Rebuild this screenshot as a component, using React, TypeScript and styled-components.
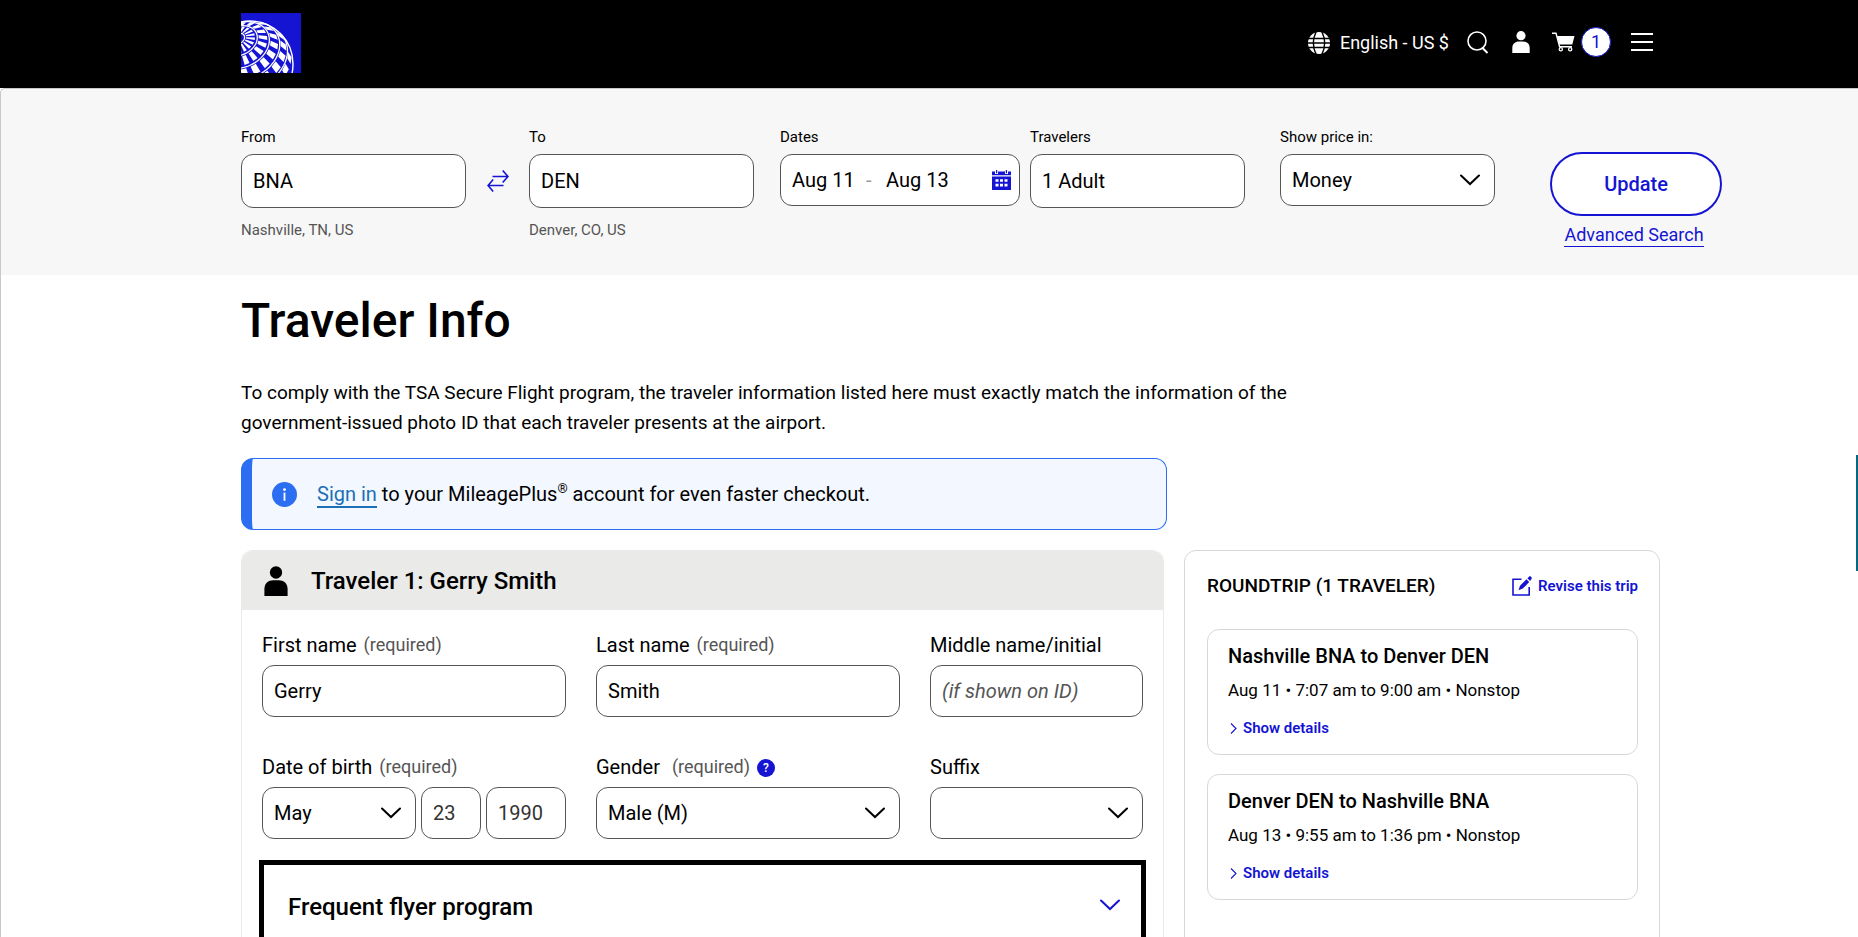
import React from 'react';
import styled, { createGlobalStyle, css } from 'styled-components';

const blue = '#1414d2';

const GlobalStyle = createGlobalStyle`
  *, *::before, *::after { box-sizing: border-box; }
  html, body { margin: 0; }
  body {
    background: #fff;
    color: #000;
    font-family: Roboto, "Liberation Sans", sans-serif;
    font-size: 18px;
    overflow-x: hidden;
  }
  #root { height: 100vh; overflow: hidden; }
  button, input, select { font: inherit; color: inherit; }
  h1, h2, h3, p { margin: 0; }
  a { color: inherit; text-decoration: none; }
`;

/* ---------- globe mark ---------- */

type Vec = [number, number, number];
const cross = (a: Vec, b: Vec): Vec => [
  a[1] * b[2] - a[2] * b[1],
  a[2] * b[0] - a[0] * b[2],
  a[0] * b[1] - a[1] * b[0],
];
const unit = (a: Vec): Vec => {
  const l = Math.hypot(...a);
  return [a[0] / l, a[1] / l, a[2] / l];
};
const pole = unit([-0.28, -0.6, 0.75]);
const axisU = unit(cross(pole, [0, 0, 1]));
const axisV = cross(pole, axisU);
const globe = { x: 9, y: 51, r: 43 };

const project = (colat: number, lon: number) => {
  const t = (colat * Math.PI) / 180;
  const f = (lon * Math.PI) / 180;
  const at = (i: number) =>
    Math.cos(t) * pole[i] + Math.sin(t) * (Math.cos(f) * axisU[i] + Math.sin(f) * axisV[i]);
  return { x: globe.x + globe.r * at(0), y: globe.y + globe.r * at(1), z: at(2) };
};

const rings = [9, 26, 43, 60, 77];

const ringPath = (colat: number) => {
  let d = '';
  let open = false;
  for (let lon = 0; lon <= 360; lon += 4) {
    const p = project(colat, lon);
    if (p.z < 0) {
      open = false;
      continue;
    }
    d += `${open ? 'L' : 'M'}${p.x.toFixed(2)} ${p.y.toFixed(2)}`;
    open = true;
  }
  return d;
};

const tilePath = () => {
  let d = '';
  rings.forEach((inner, band) => {
    for (let lon = 0; lon < 360; lon += 20) {
      const start = lon + (band % 2 ? 10 : 0);
      const corners = [
        project(inner + 2, start),
        project(inner + 2, start + 11),
        project(inner + 14, start + 11),
        project(inner + 14, start),
      ];
      if (corners.some((p) => p.z < 0)) continue;
      d += `M${corners.map((p) => `${p.x.toFixed(2)} ${p.y.toFixed(2)}`).join('L')}Z`;
    }
  });
  return d;
};

const Logo = () => (
  <svg width="60" height="60" viewBox="0 0 60 60" aria-hidden="true">
    <rect width="60" height="60" fill={blue} />
    <path d={tilePath()} fill="#fff" />
    <path d={rings.map(ringPath).join('')} fill="none" stroke="#fff" strokeWidth="1.3" />
    <circle cx={globe.x} cy={globe.y} r={globe.r} fill="none" stroke="#fff" strokeWidth="1.4" />
  </svg>
);

/* ---------- icons ---------- */

const GlobeIcon = () => (
  <svg width="22" height="22" viewBox="0 0 22 22" aria-hidden="true">
    <circle cx="11" cy="11" r="11" fill="#fff" />
    <g fill="none" stroke="#000" strokeWidth="1.4">
      <path d="M0 6.5H22M0 11H22M0 15.5H22" />
      <path d="M8.5 -1Q2.2 11 8.5 23M13.5 -1Q19.8 11 13.5 23" />
    </g>
  </svg>
);
const SearchIcon = () => (
  <svg width="22" height="23" viewBox="0 0 22 23" fill="none" stroke="#fff" strokeWidth="1.6" aria-hidden="true">
    <circle cx="10" cy="10" r="9" />
    <path d="M15 16.5L20.5 22" strokeWidth="2" />
  </svg>
);
const PersonIcon = ({ width, height }: { width: number; height: number }) => (
  <svg width={width} height={height} viewBox="0 0 18 22" preserveAspectRatio="none" fill="currentColor" aria-hidden="true">
    <circle cx="9" cy="4.7" r="4.6" />
    <path d="M0.3 22V17C0.3 12.7 3.2 10.4 7 10.4H11C14.8 10.4 17.7 12.7 17.7 17V22Z" />
  </svg>
);
const CartIcon = () => (
  <svg width="23" height="20" viewBox="0 0 23 20" aria-hidden="true">
    <path d="M0 1.3H4L7.6 14.8H20" fill="none" stroke="#fff" strokeWidth="1.4" />
    <path d="M5 4H22.5L20.3 12.5H7.3Z" fill="#fff" />
    <circle cx="8.8" cy="17.2" r="1.6" fill="none" stroke="#fff" strokeWidth="1.3" />
    <circle cx="18.2" cy="17.2" r="1.6" fill="none" stroke="#fff" strokeWidth="1.3" />
  </svg>
);
const MenuIcon = () => (
  <svg width="22" height="18" viewBox="0 0 22 18" stroke="#fff" strokeWidth="2" aria-hidden="true">
    <path d="M0 1H22M0 9H22M0 17H22" />
  </svg>
);
const SwapIcon = () => (
  <svg width="22" height="22" viewBox="0 0 22 22" fill="none" stroke={blue} strokeWidth="1.6" aria-hidden="true">
    <path d="M5.5 6.5H21M15.7 0.5L21 6.5L15.7 12.5M16.5 15.5H1M6.2 9.5L1 15.5L6.2 21.5" />
  </svg>
);
const CalendarIcon = () => (
  <svg width="19" height="20" viewBox="0 0 19 20" aria-hidden="true">
    <path fill={blue} d="M0 1.5H3V4H6V1.5H13V4H16V1.5H19V5.3H0ZM4 0H5.2V3.3H4ZM13.8 0H15V3.3H13.8Z" />
    <rect y="6.5" width="19" height="13.5" fill={blue} />
    <path fill="#fff" d="M3.5 9.2h3v2.6h-3zM8 9.2h3v2.6h-3zM12.5 9.2h3v2.6h-3zM3.5 13.8h3v2.6h-3zM8 13.8h3v2.6h-3zM12.5 13.8h3v2.6h-3z" />
  </svg>
);
const ChevronIcon = ({ color = '#000' }: { color?: string }) => (
  <svg width="20" height="12" viewBox="0 0 20 12" fill="none" stroke={color} strokeWidth="2" strokeLinecap="round" aria-hidden="true">
    <path d="M1 1.5L10 10L19 1.5" />
  </svg>
);
const SmallChevron = () => (
  <svg width="9" height="11" viewBox="0 0 9 11" fill="none" stroke={blue} strokeWidth="1.1" aria-hidden="true">
    <path d="M3 0.5L8 5.5L3 10.5" />
  </svg>
);
const EditIcon = () => (
  <svg width="20" height="20" viewBox="0 0 20 20" aria-hidden="true">
    <path d="M9.5 3.2H1V19H17.2V11" fill="none" stroke={blue} strokeWidth="1.6" />
    <path d="M6.5 14.2L8 9.8L14.4 3.3L17.2 6.1L10.8 12.6ZM15.4 2.3L17.3 0.4Q18 -0.2 18.7 0.5L19.6 1.4Q20.2 2.1 19.6 2.8L18.1 4.9Z" fill={blue} />
  </svg>
);
const InfoIcon = () => (
  <svg width="25" height="25" viewBox="0 0 25 25" aria-hidden="true">
    <circle cx="12.5" cy="12.5" r="12.5" fill="#2b6ef2" />
    <circle cx="12.5" cy="7.6" r="1.4" fill="#fff" />
    <rect x="11.6" y="10.6" width="1.8" height="8.2" fill="#fff" />
  </svg>
);

/* ---------- header ---------- */

const Header = styled.header`
  display: flex;
  align-items: flex-start;
  justify-content: space-between;
  height: 88px;
  padding: 13px 205px 0 241px;
  background: #000;
`;
const HomeLink = styled.a`
  display: block;
  height: 60px;
`;
const Tools = styled.nav`
  display: flex;
  align-items: center;
  height: 58px;
  color: #fff;
`;
const ToolButton = styled.button<{ $space?: number }>`
  display: flex;
  align-items: center;
  gap: 10px;
  margin: 0 0 0 ${(p) => p.$space ?? 0}px;
  padding: 0;
  border: 0;
  background: none;
  line-height: 30px;
  white-space: nowrap;
  cursor: pointer;
`;
const LanguageButton = styled(ToolButton)`
  padding-top: 2px;
`;
const CartCount = styled.span`
  width: 30px;
  height: 30px;
  margin-left: -4px;
  border: 1px solid ${blue};
  border-radius: 50%;
  background: #fff;
  color: ${blue};
  line-height: 28px;
  text-align: center;
`;

/* ---------- search bar ---------- */

const SearchBar = styled.form`
  display: flex;
  align-items: flex-start;
  height: 187px;
  padding: 39px 136px 0 240px;
  border-top: 1px solid #c8c8c8;
  border-top-left-radius: 5px;
  border-left: 1px solid #c8c8c8;
  background: #f7f7f7;
`;
const SearchField = styled.div<{ $grow: number; $space?: number }>`
  display: flex;
  flex-direction: column;
  flex: ${(p) => p.$grow} 1 0;
  min-width: 0;
  margin-left: ${(p) => p.$space ?? 0}px;
`;
const SearchLabel = styled.label`
  height: 26px;
  line-height: 18px;
  font-size: 15px;
`;
const Hint = styled.span`
  margin-top: 12px;
  line-height: 20px;
  font-size: 15px;
  color: #555;
`;
const SwapButton = styled.button`
  display: grid;
  place-items: center;
  width: 63px;
  height: 54px;
  margin-top: 26px;
  padding: 0;
  border: 0;
  background: none;
`;

const box = css`
  border: 1px solid #555;
  border-radius: 12px;
  background: #fff;
`;
const TextBox = styled.input<{ $tall?: boolean; $muted?: boolean }>`
  ${box}
  width: 100%;
  min-width: 0;
  height: ${(p) => (p.$tall ? 54 : 52)}px;
  padding: 0 11px;
  font-size: 20px;
  color: ${(p) => (p.$muted ? '#333' : '#000')};
  &::placeholder { color: #555; font-style: italic; opacity: 1; }
`;
const SelectWrap = styled.div`
  ${box}
  display: grid;
  grid-template-columns: minmax(0, 1fr) 34px;
  align-items: center;
  height: 52px;
  select {
    grid-area: 1 / 1 / 2 / 3;
    appearance: none;
    width: 100%;
    height: 50px;
    padding: 0 11px;
    border: 0;
    border-radius: 12px;
    background: none;
    font-size: 20px;
  }
  svg { grid-area: 1 / 2; pointer-events: none; }
`;
const DateBox = styled.div`
  ${box}
  display: flex;
  align-items: center;
  height: 52px;
  padding: 0 8px 0 11px;
  font-size: 20px;
  input {
    width: 74px;
    padding: 0;
    border: 0;
    background: none;
  }
  span { width: 20px; color: #999; }
  svg { margin-left: auto; }
`;
const SearchActions = styled.div`
  display: flex;
  flex-direction: column;
  align-items: center;
  width: 172px;
  margin: 24px 0 0 55px;
`;
const UpdateButton = styled.button`
  width: 100%;
  height: 64px;
  border: 2px solid ${blue};
  border-radius: 32px;
  background: #fff;
  color: ${blue};
  font-size: 20px;
  font-weight: 500;
`;
const AdvancedLink = styled.a`
  margin: 8px 4px 0 0;
  border-bottom: 1px solid ${blue};
  color: ${blue};
  font-size: 18px;
  line-height: 22px;
  white-space: nowrap;
`;

/* ---------- main ---------- */

const Main = styled.main`
  padding: 18px 198px 0 240px;
  border-left: 1px solid #c8c8c8;
`;
const Title = styled.h1`
  font-size: 48px;
  font-weight: 500;
  line-height: 56px;
`;
const Intro = styled.p`
  max-width: 1080px;
  margin-top: 29px;
  font-size: 19px;
  line-height: 30px;
`;
const Columns = styled.div`
  display: grid;
  grid-template-columns: minmax(0, 923fr) minmax(0, 476fr);
  gap: 20px;
  align-items: start;
  margin-top: 20px;
`;
const Notice = styled.section`
  display: flex;
  align-items: center;
  gap: 20px;
  width: calc(66% - 11px);
  height: 72px;
  margin-top: 20px;
  padding-left: 20px;
  border: 1px solid #2b6ef2;
  border-left-width: 11px;
  border-radius: 12px;
  background: #f3f7ff;
  p { font-size: 20px; line-height: 26px; }
  a { border-bottom: 2px solid #1b6fb5; color: #1b6fb5; }
  sup { font-size: 13px; line-height: 0; }
`;
const TravelerCard = styled.section`
  border-radius: 12px 12px 0 0;
  border: 1px solid #eaeae8;
  border-bottom: 0;
`;
const TravelerHead = styled.header`
  display: flex;
  align-items: center;
  gap: 23px;
  height: 59px;
  padding-left: 22px;
  border-radius: 11px 11px 0 0;
  background: #eaeae8;
`;
const SectionTitle = styled.h2`
  font-size: 24px;
  font-weight: 500;
  line-height: 32px;
`;
const FormGrid = styled.form`
  display: grid;
  grid-template-columns: minmax(0, 304fr) minmax(0, 304fr) minmax(0, 213fr);
  gap: 38px 30px;
  padding: 23px 20px 21px;
`;
const Field = styled.div`
  min-width: 0;
`;
const FieldLabel = styled.label<{ $gap?: number }>`
  display: flex;
  align-items: center;
  gap: ${(p) => p.$gap ?? 7}px;
  height: 24px;
  margin-bottom: 8px;
  font-size: 20px;
  line-height: 24px;
  white-space: nowrap;
`;
const Required = styled.span`
  font-size: 18px;
  color: #555;
`;
const Help = styled.button`
  width: 18px;
  height: 18px;
  padding: 0;
  border: 0;
  border-radius: 50%;
  background: ${blue};
  color: #fff;
  font-size: 12px;
  font-weight: 500;
  line-height: 18px;
`;
const LabelRow = styled.div`
  display: flex;
  align-items: flex-start;
  gap: 7px;
  ${Help} { margin-top: 4px; }
`;
const BirthRow = styled.div`
  display: grid;
  grid-template-columns: minmax(0, 154fr) minmax(0, 60fr) minmax(0, 80fr);
  gap: 5px;
`;
const ProgramButton = styled.button`
  display: flex;
  align-items: flex-start;
  justify-content: space-between;
  width: calc(100% - 34px);
  height: 140px;
  margin: 0 17px;
  padding: 26px 21px 0 24px;
  border: 5px solid #000;
  background: #fff;
  text-align: left;
  svg { margin-top: 8px; }
`;

const TripCard = styled.aside`
  min-height: 560px;
  padding: 21px 21px 22px 22px;
  border: 1px solid #d8d8d8;
  border-radius: 12px;
`;
const TripHead = styled.header`
  display: flex;
  align-items: center;
  justify-content: space-between;
  height: 28px;
  margin-bottom: 29px;
`;
const TripTitle = styled.h2`
  font-size: 19px;
  font-weight: 500;
  line-height: 28px;
`;
const ActionLink = styled.a`
  display: flex;
  align-items: center;
  gap: 6px;
  color: ${blue};
  font-size: 15px;
  font-weight: 600;
  line-height: 20px;
`;
const FlightCard = styled.article`
  height: 126px;
  margin-bottom: 19px;
  padding: 13px 20px;
  border: 1px solid #d8d8d8;
  border-radius: 12px;
`;
const FlightTitle = styled.h3`
  font-size: 20px;
  font-weight: 500;
  line-height: 26px;
`;
const FlightTime = styled.p`
  margin: 9px 0 16px;
  font-size: 17px;
  line-height: 24px;
`;
const FeedbackTab = styled.button`
  position: fixed;
  top: 455px;
  right: 0;
  width: 2px;
  height: 116px;
  padding: 0;
  border: 0;
  background: #036880;
`;

const flights = [
  { route: 'Nashville BNA to Denver DEN', time: 'Aug 11 • 7:07 am to 9:00 am • Nonstop' },
  { route: 'Denver DEN to Nashville BNA', time: 'Aug 13 • 9:55 am to 1:36 pm • Nonstop' },
];

export default function App() {
  return (
    <>
      <GlobalStyle />
      <Header>
        <HomeLink href="#" aria-label="Home"><Logo /></HomeLink>
        <Tools aria-label="Account tools">
          <LanguageButton><GlobeIcon />English - US $</LanguageButton>
          <ToolButton $space={18} aria-label="Search"><SearchIcon /></ToolButton>
          <ToolButton $space={23} aria-label="My account"><PersonIcon width={18} height={22} /></ToolButton>
          <ToolButton $space={22} aria-label="Cart"><CartIcon /><CartCount>1</CartCount></ToolButton>
          <ToolButton $space={20} aria-label="Menu"><MenuIcon /></ToolButton>
        </Tools>
      </Header>

      <SearchBar>
        <SearchField $grow={225}>
          <SearchLabel htmlFor="from">From</SearchLabel>
          <TextBox id="from" $tall defaultValue="BNA" />
          <Hint>Nashville, TN, US</Hint>
        </SearchField>
        <SwapButton type="button" aria-label="Swap airports"><SwapIcon /></SwapButton>
        <SearchField $grow={225}>
          <SearchLabel htmlFor="to">To</SearchLabel>
          <TextBox id="to" $tall defaultValue="DEN" />
          <Hint>Denver, CO, US</Hint>
        </SearchField>
        <SearchField $grow={240} $space={26}>
          <SearchLabel htmlFor="depart">Dates</SearchLabel>
          <DateBox>
            <input id="depart" defaultValue="Aug 11" />
            <span>-</span>
            <input aria-label="Return date" defaultValue="Aug 13" />
            <CalendarIcon />
          </DateBox>
        </SearchField>
        <SearchField $grow={215} $space={10}>
          <SearchLabel htmlFor="travelers">Travelers</SearchLabel>
          <TextBox id="travelers" $tall defaultValue="1 Adult" />
        </SearchField>
        <SearchField $grow={215} $space={35}>
          <SearchLabel htmlFor="price">Show price in:</SearchLabel>
          <SelectWrap>
            <select id="price"><option>Money</option></select>
            <ChevronIcon />
          </SelectWrap>
        </SearchField>
        <SearchActions>
          <UpdateButton type="button">Update</UpdateButton>
          <AdvancedLink href="#">Advanced Search</AdvancedLink>
        </SearchActions>
      </SearchBar>

      <Main>
        <Title>Traveler Info</Title>
        <Intro>
          To comply with the TSA Secure Flight program, the traveler information listed here must exactly match the information of the government-issued photo ID that each traveler presents at the airport.
        </Intro>
        <Notice>
          <InfoIcon />
          <p><a href="#">Sign in</a> to your MileagePlus<sup>®</sup> account for even faster checkout.</p>
        </Notice>
        <Columns>
          <TravelerCard>
            <TravelerHead>
              <PersonIcon width={24} height={30} />
              <SectionTitle>Traveler 1: Gerry Smith</SectionTitle>
            </TravelerHead>
            <FormGrid>
              <Field>
                <FieldLabel htmlFor="first">First name <Required>(required)</Required></FieldLabel>
                <TextBox id="first" defaultValue="Gerry" />
              </Field>
              <Field>
                <FieldLabel htmlFor="last">Last name <Required>(required)</Required></FieldLabel>
                <TextBox id="last" defaultValue="Smith" />
              </Field>
              <Field>
                <FieldLabel htmlFor="middle">Middle name/initial</FieldLabel>
                <TextBox id="middle" placeholder="(if shown on ID)" />
              </Field>
              <Field>
                <FieldLabel htmlFor="month">Date of birth <Required>(required)</Required></FieldLabel>
                <BirthRow>
                  <SelectWrap>
                    <select id="month"><option>May</option></select>
                    <ChevronIcon />
                  </SelectWrap>
                  <TextBox $muted aria-label="Day" defaultValue="23" />
                  <TextBox $muted aria-label="Year" defaultValue="1990" />
                </BirthRow>
              </Field>
              <Field>
                <LabelRow>
                  <FieldLabel htmlFor="gender" $gap={12}>Gender <Required>(required)</Required></FieldLabel>
                  <Help type="button" aria-label="Help with gender">?</Help>
                </LabelRow>
                <SelectWrap>
                  <select id="gender"><option>Male (M)</option></select>
                  <ChevronIcon />
                </SelectWrap>
              </Field>
              <Field>
                <FieldLabel htmlFor="suffix">Suffix</FieldLabel>
                <SelectWrap>
                  <select id="suffix"><option></option></select>
                  <ChevronIcon />
                </SelectWrap>
              </Field>
            </FormGrid>
            <ProgramButton type="button" aria-expanded="false">
              <SectionTitle as="span">Frequent flyer program</SectionTitle>
              <ChevronIcon color={blue} />
            </ProgramButton>
          </TravelerCard>

          <TripCard>
            <TripHead>
              <TripTitle>ROUNDTRIP (1 TRAVELER)</TripTitle>
              <ActionLink href="#"><EditIcon />Revise this trip</ActionLink>
            </TripHead>
            {flights.map((f) => (
              <FlightCard key={f.route}>
                <FlightTitle>{f.route}</FlightTitle>
                <FlightTime>{f.time}</FlightTime>
                <ActionLink href="#"><SmallChevron />Show details</ActionLink>
              </FlightCard>
            ))}
          </TripCard>
        </Columns>
      </Main>
      <FeedbackTab type="button" aria-label="Feedback" />
    </>
  );
}
